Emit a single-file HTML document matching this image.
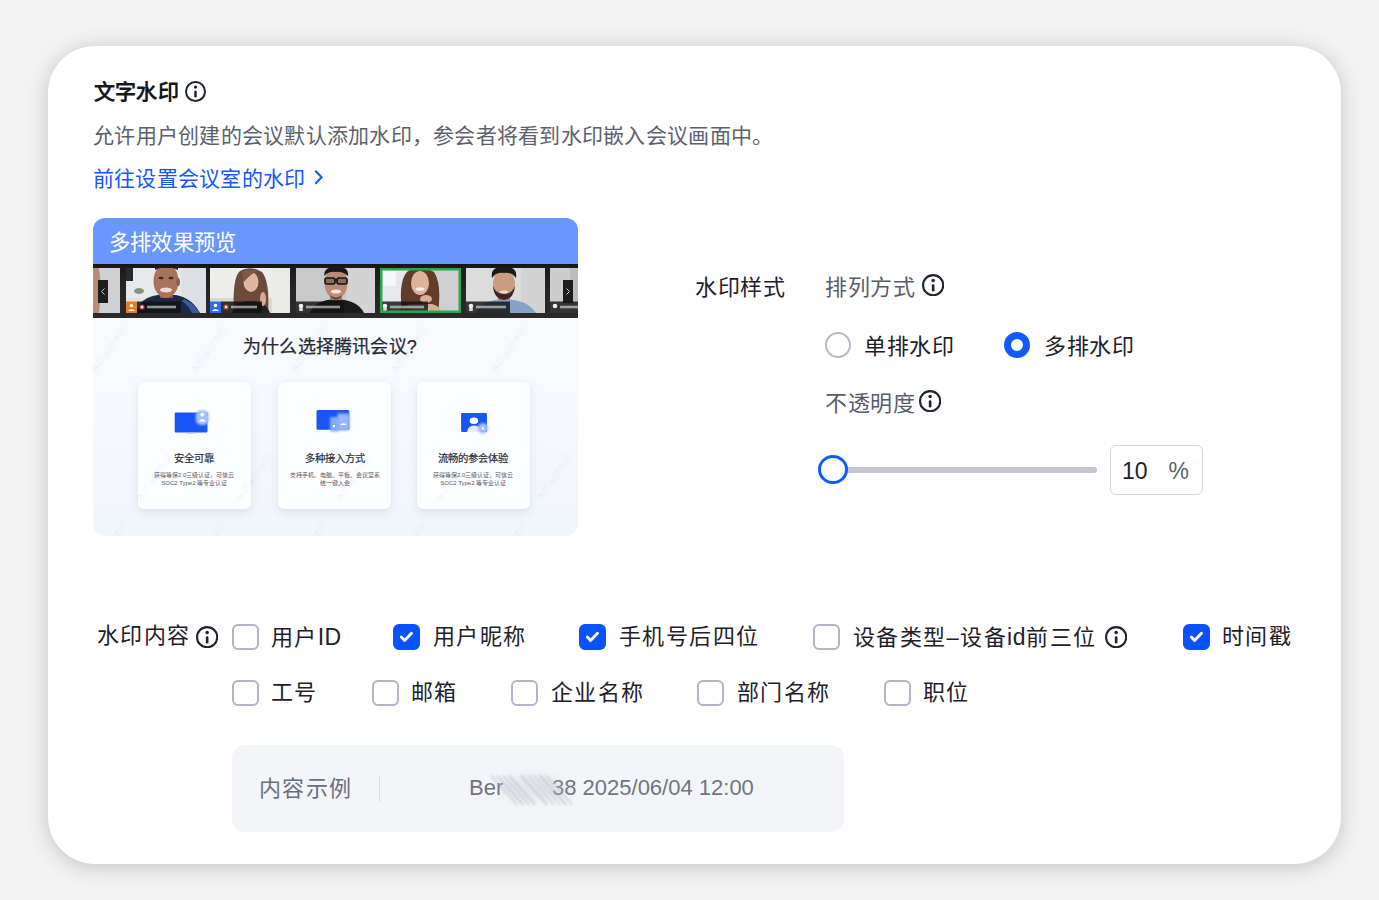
<!DOCTYPE html>
<html lang="zh-CN"><head><meta charset="utf-8">
<style>
*{margin:0;padding:0;box-sizing:border-box;}
html,body{width:1379px;height:900px;overflow:hidden;background:#f3f3f3;font-family:"Liberation Sans",sans-serif;}
.card{position:absolute;left:48px;top:46px;width:1293px;height:818px;background:#fff;border-radius:47px;box-shadow:0 3px 22px rgba(0,0,0,0.2);}
.abs{position:absolute;white-space:nowrap;}
.t{font-size:21px;line-height:1;}
.info{position:absolute;width:21px;height:21px;border:2px solid #2b2e3b;border-radius:50%;}
.info:before{content:"";position:absolute;left:7.5px;top:3.5px;width:2.6px;height:2.6px;border-radius:50%;background:#2b2e3b;}
.info:after{content:"";position:absolute;left:7.7px;top:7.5px;width:2.2px;height:6.5px;border-radius:1px;background:#2b2e3b;}
.pv{position:absolute;left:93px;top:218px;width:485px;height:318px;border-radius:12px;overflow:hidden;background:linear-gradient(180deg,#f9fbfe 0%,#f6f9fd 60%,#f1f6fc 100%);}
.pvh{position:absolute;left:0;top:0;width:485px;height:46px;background:#6898fd;color:#fff;font-size:21.3px;line-height:50px;padding-left:16px;letter-spacing:0.2px;}
.strip{position:absolute;left:0;top:46px;width:485px;height:53.5px;background:linear-gradient(180deg,#141415 0,#1c1c1d 8%,#262627 50%,#2a2a2b 100%);}
.tl{position:absolute;top:4px;}
.tile{position:absolute;top:4px;height:45px;overflow:hidden;background:#ccc;}
.ph{position:absolute;left:0;top:0;right:0;bottom:0;}
.fc{position:absolute;border-radius:48% 48% 45% 45%;}
.hr{position:absolute;border-radius:50%;}
.sh{position:absolute;border-radius:45% 45% 0 0;}
.lb{position:absolute;left:0;bottom:0;height:11px;background:rgba(20,20,20,.75);}
.lb b{position:absolute;left:0;top:0;width:10px;height:11px;}
.lb i{position:absolute;left:14px;top:4px;width:22px;height:3px;background:rgba(230,230,230,.6);}
.arr{position:absolute;top:12px;width:10px;height:23px;background:#1e1e1e;color:#ddd;font-size:12px;line-height:22px;text-align:center;}
.pvt{position:absolute;left:150px;top:118.5px;font-size:18px;line-height:1.2;color:#252936;white-space:nowrap;letter-spacing:0.2px;-webkit-text-stroke:0.25px #252936;}
.pc{position:absolute;top:163.5px;width:112.5px;height:127.5px;background:#fdfeff;border-radius:6px;box-shadow:0 4px 10px rgba(90,120,170,.14),0 0 2px rgba(90,120,170,.08);}
.wm{position:absolute;font-size:9px;color:rgba(140,150,170,.12);transform:rotate(-55deg);transform-origin:0 0;white-space:nowrap;}
.ico{position:absolute;left:0;top:0;}
.ic{position:absolute;background:#1e5bf5;border-radius:1px;}
.bd{position:absolute;background:rgba(150,185,250,.85);}
.pct{position:absolute;left:0;right:0;top:68px;text-align:center;font-size:10.3px;font-weight:normal;-webkit-text-stroke:0.2px #2a2e38;color:#2a2e38;white-space:nowrap;}
.pcd{position:absolute;left:0;right:0;top:89px;text-align:center;font-size:6px;line-height:8.4px;color:#555a66;white-space:nowrap;}
.t2{font-size:22px;line-height:1;}
.num{font-size:22px;line-height:1;}
.n2{font-size:23px;line-height:1;}
.i2{width:22.5px;height:22.5px;}
.cb{position:absolute;width:26.5px;height:26.5px;margin-top:-0.5px;border:2px solid #b1b5c6;border-radius:6px;background:#fff;}
.cb.on{background:#0b52ff;border-color:#0b52ff;}
.cb.on svg{position:absolute;left:-2px;top:-2px;}
</style></head>
<body>
<div class="card"></div>

<!-- header -->
<div class="abs t" style="left:93.5px;top:81px;font-weight:bold;color:#15171c;letter-spacing:0.45px;">文字水印</div>
<svg class="abs" style="left:185px;top:81px;" width="21" height="21" viewBox="0 0 22 22"><circle cx="11" cy="11" r="9.95" fill="none" stroke="#20232e" stroke-width="2.1"/><circle cx="11" cy="6.4" r="1.7" fill="#20232e"/><path d="M11 11.3V16" stroke="#20232e" stroke-width="2.6" stroke-linecap="round"/></svg>
<div class="abs t" style="left:93px;top:125px;color:#5c616d;letter-spacing:0.26px;">允许用户创建的会议默认添加水印，参会者将看到水印嵌入会议画面中。</div>
<div class="abs t" style="left:93px;top:168px;color:#1557ff;letter-spacing:0.22px;">前往设置会议室的水印</div>
<svg class="abs" style="left:312px;top:168px" width="12" height="18" viewBox="0 0 12 18"><path d="M3.3 2.8 L9.6 9.3 L3.3 15.8" fill="none" stroke="#1557ff" stroke-width="2.1"/></svg>

<!-- preview -->
<svg width="0" height="0" style="position:absolute"><defs><filter id="ib" x="-30%" y="-30%" width="160%" height="160%"><feGaussianBlur stdDeviation="0.8"/></filter></defs></svg>
<div class="pv">
  <div class="pvh">多排效果预览</div>
  <div class="strip"><svg class="tl" style="left:0px;" width="27" height="45" viewBox="0 0 27 45" preserveAspectRatio="none"><rect width="27" height="45" fill="#d0d0d2"/><path d="M0 0 H6 Q9 20 6 45 H0 Z" fill="#b98c7a" filter="url(#bl)"/><rect x="5" y="12" width="10" height="23" fill="#1e1e1e"/><path d="M11.5 20.5 L8.5 23.5 L11.5 26.5" fill="none" stroke="#ccc" stroke-width="1"/></svg><svg class="tl" style="left:32.5px;" width="80" height="45" viewBox="0 0 80 45" preserveAspectRatio="none"><defs><filter id="bl" x="-10%" y="-10%" width="120%" height="120%"><feGaussianBlur stdDeviation="0.7"/></filter></defs><rect width="80" height="45" fill="#e6e8ea"/><rect x="0" y="30" width="80" height="15" fill="#dfe3e8"/><rect x="55" y="0" width="25" height="45" fill="#dde1e5"/><g filter="url(#bl)"><rect x="0" y="0" width="7" height="13" fill="#2a2a2a"/><ellipse cx="13" cy="23" rx="5" ry="3" fill="#8d927f"/><path d="M10 45 Q14 29 32 27 L50 27 Q66 30 74 45 Z" fill="#1e2a46"/><path d="M58 31 Q68 35 74 45 L66 45 Q62 37 56 33 Z" fill="#3b5a9a"/><rect x="34" y="19" width="13" height="11" fill="#7d5443"/><ellipse cx="40" cy="13" rx="12.5" ry="17" fill="#a8735c"/><path d="M29 2 Q40 -4 52 2 L52 -1 L29 -1 Z" fill="#2b211c"/><ellipse cx="52" cy="14" rx="2" ry="4" fill="#8e604d"/><ellipse cx="40" cy="22" rx="6" ry="2.6" fill="#ecdcd4"/><ellipse cx="35" cy="10" rx="2.5" ry="1.2" fill="#3a2a22"/><ellipse cx="45" cy="10" rx="2.5" ry="1.2" fill="#3a2a22"/></g><rect x="0" y="33.5" width="11" height="11.5" fill="#f07a24"/><circle cx="5.5" cy="37.5" r="1.8" fill="#fff"/><path d="M2 43 Q5.5 39 9 43 Z" fill="#fff"/><rect x="11" y="33.5" width="44" height="11.5" fill="rgba(18,18,20,.85)"/><circle cx="16" cy="39" r="2.6" fill="#c44"/><circle cx="16" cy="39" r="1.3" fill="#eee"/><rect x="21" y="37.7" width="29" height="2.6" fill="rgba(235,235,235,.6)"/></svg><svg class="tl" style="left:117px;" width="80" height="45" viewBox="0 0 80 45" preserveAspectRatio="none"><rect width="80" height="45" fill="#ededea"/><rect x="0" y="30" width="80" height="15" fill="#d8dad2"/><rect x="62" y="0" width="18" height="45" fill="#e9e9e6"/><g filter="url(#bl)"><path d="M24 45 Q22 10 30 3 Q40 -3 52 4 Q60 14 58 45 Z" fill="#6c4c3a"/><path d="M22 45 Q26 33 40 33 Q56 33 60 45 Z" fill="#242424"/><ellipse cx="41" cy="14" rx="7.5" ry="10" fill="#e0b69e"/><ellipse cx="53" cy="31" rx="3" ry="7" fill="#d8ab92"/><path d="M32 4 Q36 0 48 3 Q40 6 34 14 Z" fill="#7d5a45"/></g><rect x="0" y="33.5" width="11" height="11.5" fill="#2d6cf0"/><circle cx="5.5" cy="37.5" r="1.8" fill="#fff"/><path d="M2 43 Q5.5 39 9 43 Z" fill="#fff"/><rect x="11" y="33.5" width="41" height="11.5" fill="rgba(18,18,20,.85)"/><circle cx="16" cy="39" r="2.6" fill="#c44"/><circle cx="16" cy="39" r="1.3" fill="#eee"/><rect x="21" y="37.7" width="26" height="2.6" fill="rgba(235,235,235,.6)"/></svg><svg class="tl" style="left:202.5px;" width="79.5" height="45" viewBox="0 0 79.5 45" preserveAspectRatio="none"><rect width="79.5" height="45" fill="#c9c9c9"/><rect x="50" y="0" width="29.5" height="45" fill="#d3d3d3"/><g filter="url(#bl)"><path d="M14 45 Q18 32 40 31 Q62 32 68 45 Z" fill="#1d1d1d"/><rect x="34" y="22" width="12" height="10" fill="#9f745f"/><ellipse cx="40" cy="15" rx="11.5" ry="16" fill="#bb8c73"/><path d="M28 8 Q28 -2 40 -1 Q53 -2 52 8 Q46 3 40 4 Q33 3 28 8 Z" fill="#1a1716"/><rect x="29" y="10" width="10" height="6" rx="2" fill="#8d6a5a" stroke="#151515" stroke-width="1.6"/><rect x="41" y="10" width="10" height="6" rx="2" fill="#8d6a5a" stroke="#151515" stroke-width="1.6"/><rect x="38" y="11" width="4" height="1.4" fill="#151515"/><ellipse cx="40" cy="23.5" rx="5" ry="2" fill="#efe3dc"/><path d="M34 27 Q40 33 46 27 Q44 31 40 31 Q36 31 34 27 Z" fill="#2e2420"/></g><rect x="0" y="33.5" width="48" height="11.5" fill="rgba(18,18,20,.82)"/><circle cx="5" cy="38" r="2.3" fill="#eee"/><rect x="3.2" y="40" width="3.6" height="3" fill="#ddd"/><rect x="10" y="37.7" width="34" height="2.6" fill="rgba(235,235,235,.6)"/></svg><svg class="tl" style="left:287px;" width="81" height="45" viewBox="0 0 81 45" preserveAspectRatio="none"><rect width="81" height="45" fill="#cfcfd3"/><rect x="0" y="0" width="30" height="45" fill="#e6e8ea"/><rect x="2" y="0" width="14" height="18" fill="#f6f7f8"/><g filter="url(#bl)"><path d="M22 45 Q18 12 28 3 Q40 -4 54 4 Q62 16 58 45 Z" fill="#5e3c2b"/><path d="M18 45 Q24 36 32 36 L52 36 Q60 38 62 45 Z" fill="#d7ad96"/><path d="M30 45 Q33 37 40 37 Q48 37 50 45 Z" fill="#e6dedb"/><ellipse cx="40" cy="15" rx="9" ry="12" fill="#dfb39a"/><ellipse cx="46" cy="31" rx="6" ry="4" fill="#dcae95"/><ellipse cx="40" cy="21" rx="4.5" ry="1.8" fill="#f5ece8"/></g><rect x="0" y="33.5" width="48" height="11.5" fill="rgba(18,18,20,.82)"/><circle cx="5" cy="38" r="2.3" fill="#eee"/><rect x="3.2" y="40" width="3.6" height="3" fill="#ddd"/><rect x="10" y="37.7" width="34" height="2.6" fill="rgba(235,235,235,.6)"/><rect x="1.25" y="1.25" width="78.5" height="42.5" fill="none" stroke="#2aa84a" stroke-width="2.5"/></svg><svg class="tl" style="left:372.6px;" width="79.4" height="45" viewBox="0 0 79.4 45" preserveAspectRatio="none"><rect width="79.4" height="45" fill="#dcdcdc"/><rect x="55" y="0" width="24.4" height="45" fill="#d3d3d3"/><g filter="url(#bl)"><path d="M10 45 Q16 32 38 31 Q62 32 70 45 Z" fill="#86a2c6"/><rect x="32" y="22" width="12" height="10" fill="#b08670"/><ellipse cx="38" cy="16" rx="11" ry="15" fill="#c99d81"/><path d="M26 10 Q24 -2 38 -1 Q52 -2 50 10 Q46 4 38 5 Q30 4 26 10 Z" fill="#1f1a17"/><path d="M27 18 Q28 31 38 32 Q48 31 49 18 Q46 26 38 26 Q30 26 27 18 Z" fill="#3b2a22"/><ellipse cx="38" cy="24" rx="4" ry="1.4" fill="#e8ddd6"/></g><rect x="0" y="33.5" width="44" height="11.5" fill="rgba(18,18,20,.82)"/><circle cx="5" cy="38" r="2.3" fill="#eee"/><rect x="3.2" y="40" width="3.6" height="3" fill="#ddd"/><rect x="10" y="37.7" width="30" height="2.6" fill="rgba(235,235,235,.6)"/></svg><svg class="tl" style="left:457px;" width="28" height="45" viewBox="0 0 28 45" preserveAspectRatio="none"><rect width="28" height="45" fill="#cdcdcd"/><rect x="20" y="0" width="8" height="45" fill="#bdbdbd"/><rect x="13" y="12" width="10" height="23" fill="#1e1e1e"/><path d="M16.5 20.5 L19.5 23.5 L16.5 26.5" fill="none" stroke="#ccc" stroke-width="1"/><rect x="0" y="33.5" width="28" height="11.5" fill="rgba(18,18,20,.82)"/><circle cx="5" cy="38" r="2.3" fill="#eee"/><rect x="10" y="37.7" width="18" height="2.6" fill="rgba(235,235,235,.6)"/></svg></div>
  <div class="pvt">为什么选择腾讯会议?</div>
  <div class="pc" style="left:45px;"><svg class="ico" width="112" height="60" viewBox="0 0 112 60"><rect x="36.7" y="30.5" width="32.8" height="20" rx="1" fill="#1a55f6"/><rect x="48" y="50.3" width="10" height="1.2" fill="#9bb5f5"/><rect x="57.8" y="28.2" width="13" height="14.7" rx="5" fill="#a3c0fb" filter="url(#ib)"/><circle cx="64.3" cy="32.4" r="1.9" fill="#fff"/><path d="M60.6 39.6 Q64.3 34.5 68 39.6 Z" fill="#fff"/></svg><div class="pct">安全可靠</div><div class="pcd">获得等保2.0三级认证，可信云<br>SOC2 Type2 等专业认证</div></div>
  <div class="pc" style="left:185.4px;"><svg class="ico" width="112" height="60" viewBox="0 0 112 60"><rect x="38.5" y="27.9" width="32.8" height="19.8" rx="1.5" fill="#1a55f6"/><rect x="52" y="35" width="9" height="14.5" rx="1" fill="#86a9fb" filter="url(#ib)"/><rect x="59.5" y="31.5" width="12" height="17" rx="1" fill="#97b6fb" filter="url(#ib)"/><path d="M62 43 Q65.5 39.5 69 43 Z" fill="#fff"/><rect x="55" y="43" width="2" height="2" fill="#fff"/></svg><div class="pct">多种接入方式</div><div class="pcd">支持手机、电脑、平板、会议室系<br>统一键入会</div></div>
  <div class="pc" style="left:324px;"><svg class="ico" width="112" height="60" viewBox="0 0 112 60"><rect x="44.1" y="31" width="25.8" height="19" rx="1" fill="#1a55f6"/><ellipse cx="56.9" cy="38.8" rx="4.2" ry="3.3" fill="#fff"/><path d="M50 50 Q51 43.5 57 43.5 Q63 43.5 64 50 Z" fill="#e8eefe"/><circle cx="65.8" cy="46.3" r="5.3" fill="#a3c0fb" filter="url(#ib)"/><path d="M65 44.5 L67.5 46.3 L65 48.1 Z" fill="#fff"/></svg><div class="pct">流畅的参会体验</div><div class="pcd">获得等保2.0三级认证，可信云<br>SOC2 Type2 等专业认证</div></div>
  <div class="wm" style="left:-5px;top:150px;">水印水印水印</div><div class="wm" style="left:95px;top:150px;">水印水印水印</div><div class="wm" style="left:195px;top:150px;">水印水印水印</div><div class="wm" style="left:295px;top:150px;">水印水印水印</div><div class="wm" style="left:395px;top:150px;">水印水印水印</div><div class="wm" style="left:495px;top:150px;">水印水印水印</div><div class="wm" style="left:40px;top:278px;">水印水印水印</div><div class="wm" style="left:140px;top:278px;">水印水印水印</div><div class="wm" style="left:240px;top:278px;">水印水印水印</div><div class="wm" style="left:340px;top:278px;">水印水印水印</div><div class="wm" style="left:440px;top:278px;">水印水印水印</div><div class="wm" style="left:540px;top:278px;">水印水印水印</div><div class="wm" style="left:-5px;top:345px;">水印水印水印</div><div class="wm" style="left:95px;top:345px;">水印水印水印</div><div class="wm" style="left:195px;top:345px;">水印水印水印</div><div class="wm" style="left:295px;top:345px;">水印水印水印</div><div class="wm" style="left:395px;top:345px;">水印水印水印</div><div class="wm" style="left:495px;top:345px;">水印水印水印</div>
</div>

<!-- right -->
<div class="abs t2" style="left:695px;top:277px;letter-spacing:0.5px;color:#1f2129;">水印样式</div>
<div class="abs t2" style="left:825px;top:277px;letter-spacing:0.5px;color:#585d6a;">排列方式</div>
<svg class="abs" style="left:922px;top:274px;" width="22.3" height="22.3" viewBox="0 0 22 22"><circle cx="11" cy="11" r="9.95" fill="none" stroke="#20232e" stroke-width="2.1"/><circle cx="11" cy="6.4" r="1.7" fill="#20232e"/><path d="M11 11.3V16" stroke="#20232e" stroke-width="2.6" stroke-linecap="round"/></svg>

<div class="abs" style="left:825px;top:332px;width:26px;height:26px;border:2px solid #b6bac9;border-radius:50%;"></div>
<div class="abs t2" style="left:864px;top:336px;letter-spacing:0.5px;color:#1f2129;">单排水印</div>
<div class="abs" style="left:1004px;top:332px;width:26px;height:26px;border:7.5px solid #0f5bff;border-radius:50%;"></div>
<div class="abs t2" style="left:1044px;top:336px;letter-spacing:0.5px;color:#1f2129;">多排水印</div>

<div class="abs t2" style="left:825px;top:393px;letter-spacing:0.5px;color:#585d6a;">不透明度</div>
<svg class="abs" style="left:919px;top:390px;" width="22.3" height="22.3" viewBox="0 0 22 22"><circle cx="11" cy="11" r="9.95" fill="none" stroke="#20232e" stroke-width="2.1"/><circle cx="11" cy="6.4" r="1.7" fill="#20232e"/><path d="M11 11.3V16" stroke="#20232e" stroke-width="2.6" stroke-linecap="round"/></svg>

<div class="abs" style="left:840px;top:466.5px;width:257px;height:6px;border-radius:3px;background:#c3c7d3;"></div>
<div class="abs" style="left:818px;top:455px;width:30px;height:29px;border:3.2px solid #0f5bff;border-radius:50%;background:#fff;"></div>
<div class="abs" style="left:1110px;top:444.5px;width:92.5px;height:50.5px;border:1.6px solid #d3d6dd;border-radius:6px;"></div>
<div class="abs n2" style="left:1122px;top:459.5px;color:#1f2129;">10</div>
<div class="abs n2" style="left:1168.5px;top:459.5px;color:#5b5f6b;">%</div>

<!-- content -->
<div class="abs t2" style="left:97px;top:624.5px;letter-spacing:1.4px;color:#1f2129;">水印内容</div>
<svg class="abs" style="left:196px;top:626px;" width="22.3" height="22.3" viewBox="0 0 22 22"><circle cx="11" cy="11" r="9.95" fill="none" stroke="#20232e" stroke-width="2.1"/><circle cx="11" cy="6.4" r="1.7" fill="#20232e"/><path d="M11 11.3V16" stroke="#20232e" stroke-width="2.6" stroke-linecap="round"/></svg>

<div class="cb" style="left:232px;top:624px;"></div><div class="abs t2" style="left:271px;top:625.5px;letter-spacing:1.4px;color:#1f2129;">用户<span style="letter-spacing:0.3px;font-size:23px;">ID</span></div>
<div class="cb on" style="left:393px;top:624px;"><svg width="26" height="26" viewBox="0 0 26 26"><path d="M8.3 13.1 L11.6 16.5 L18.5 9.3" fill="none" stroke="#fff" stroke-width="2.9" stroke-linecap="round" stroke-linejoin="round"/></svg></div><div class="abs t2" style="left:433px;top:625.5px;letter-spacing:1.4px;color:#1f2129;">用户昵称</div>
<div class="cb on" style="left:579px;top:624px;"><svg width="26" height="26" viewBox="0 0 26 26"><path d="M8.3 13.1 L11.6 16.5 L18.5 9.3" fill="none" stroke="#fff" stroke-width="2.9" stroke-linecap="round" stroke-linejoin="round"/></svg></div><div class="abs t2" style="left:619px;top:625.5px;letter-spacing:1.4px;color:#1f2129;">手机号后四位</div>
<div class="cb" style="left:813px;top:624px;"></div><div class="abs t2" style="left:853px;top:625.5px;letter-spacing:1.4px;color:#1f2129;">设备类型–设备<span style="letter-spacing:0.6px;font-size:23px;">id</span>前三位</div>
<svg class="abs" style="left:1105px;top:626px;" width="22.3" height="22.3" viewBox="0 0 22 22"><circle cx="11" cy="11" r="9.95" fill="none" stroke="#20232e" stroke-width="2.1"/><circle cx="11" cy="6.4" r="1.7" fill="#20232e"/><path d="M11 11.3V16" stroke="#20232e" stroke-width="2.6" stroke-linecap="round"/></svg>
<div class="cb on" style="left:1183px;top:624px;"><svg width="26" height="26" viewBox="0 0 26 26"><path d="M8.3 13.1 L11.6 16.5 L18.5 9.3" fill="none" stroke="#fff" stroke-width="2.9" stroke-linecap="round" stroke-linejoin="round"/></svg></div><div class="abs t2" style="left:1222px;top:625.5px;letter-spacing:1.4px;color:#1f2129;">时间戳</div>

<div class="cb" style="left:232px;top:680px;"></div><div class="abs t2" style="left:271px;top:681.5px;letter-spacing:1.4px;color:#1f2129;">工号</div>
<div class="cb" style="left:372px;top:680px;"></div><div class="abs t2" style="left:411px;top:681.5px;letter-spacing:1.4px;color:#1f2129;">邮箱</div>
<div class="cb" style="left:511px;top:680px;"></div><div class="abs t2" style="left:551px;top:681.5px;letter-spacing:1.4px;color:#1f2129;">企业名称</div>
<div class="cb" style="left:697px;top:680px;"></div><div class="abs t2" style="left:737px;top:681.5px;letter-spacing:1.4px;color:#1f2129;">部门名称</div>
<div class="cb" style="left:884px;top:680px;"></div><div class="abs t2" style="left:923px;top:681.5px;letter-spacing:1.4px;color:#1f2129;">职位</div>

<!-- example -->
<div class="abs" style="left:232px;top:745px;width:612px;height:87px;border-radius:13px;background:#f4f5f9;"></div>
<div class="abs t2" style="left:259px;top:778px;color:#6a6f7e;letter-spacing:1.3px;">内容示例</div>
<div class="abs" style="left:378.5px;top:775px;width:1.6px;height:27px;background:#dcdee5;"></div>
<div class="abs num" style="left:469px;top:777px;color:#71757f;">Ber</div>
<div class="abs num" style="left:552px;top:777px;color:#71757f;">38 2025/06/04 12:00</div>
<div class="abs" style="left:503px;top:770px;width:2.2px;height:40px;background:rgba(165,168,178,0.41);transform:rotate(-42deg);transform-origin:50% 50%;filter:blur(1.1px);border-radius:2px;"></div><div class="abs" style="left:509px;top:770px;width:2.2px;height:40px;background:rgba(165,168,178,0.49);transform:rotate(-42deg);transform-origin:50% 50%;filter:blur(1.1px);border-radius:2px;"></div><div class="abs" style="left:515px;top:770px;width:2.2px;height:40px;background:rgba(165,168,178,0.44);transform:rotate(-42deg);transform-origin:50% 50%;filter:blur(1.1px);border-radius:2px;"></div><div class="abs" style="left:521px;top:770px;width:2.2px;height:40px;background:rgba(165,168,178,0.50);transform:rotate(-42deg);transform-origin:50% 50%;filter:blur(1.1px);border-radius:2px;"></div><div class="abs" style="left:533px;top:770px;width:2.2px;height:40px;background:rgba(165,168,178,0.51);transform:rotate(-42deg);transform-origin:50% 50%;filter:blur(1.1px);border-radius:2px;"></div><div class="abs" style="left:540px;top:770px;width:2.2px;height:40px;background:rgba(165,168,178,0.37);transform:rotate(-42deg);transform-origin:50% 50%;filter:blur(1.1px);border-radius:2px;"></div><div class="abs" style="left:546px;top:770px;width:2.2px;height:40px;background:rgba(165,168,178,0.35);transform:rotate(-42deg);transform-origin:50% 50%;filter:blur(1.1px);border-radius:2px;"></div><div class="abs" style="left:552px;top:770px;width:2.2px;height:40px;background:rgba(165,168,178,0.56);transform:rotate(-42deg);transform-origin:50% 50%;filter:blur(1.1px);border-radius:2px;"></div><div class="abs" style="left:558px;top:770px;width:2.2px;height:40px;background:rgba(165,168,178,0.41);transform:rotate(-42deg);transform-origin:50% 50%;filter:blur(1.1px);border-radius:2px;"></div><div class="abs" style="left:500px;top:776px;width:66px;height:24px;background:rgba(200,202,210,.35);filter:blur(4px);border-radius:50%;"></div>
</body></html>
